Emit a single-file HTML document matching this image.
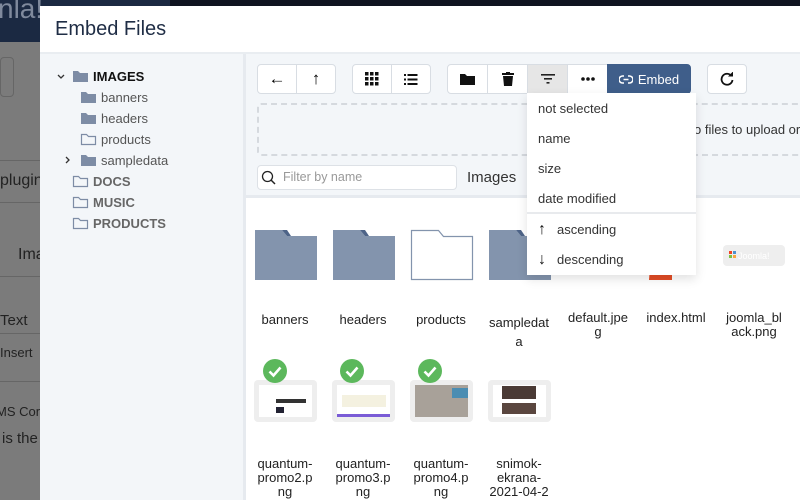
<!DOCTYPE html>
<html><head><style>
*{box-sizing:border-box;margin:0;padding:0}
body{width:800px;height:500px;overflow:hidden;position:relative;font-family:"Liberation Sans",sans-serif;background:#7b7b7b}
.abs{position:absolute}
.t{position:absolute;white-space:nowrap}
.btn{position:absolute;top:64px;height:30px;background:#fff;border:1px solid #d8dde3;display:flex;align-items:center;justify-content:center}
.dd{position:absolute;left:538px;font-size:13px;color:#333}
.lbl{position:absolute;width:78px;text-align:center;font-size:13px;color:#222;line-height:14px}
.chk{position:absolute;width:24px;height:24px;border-radius:50%;background:#5cb85c}
.thumb{position:absolute;width:63px;height:42px;background:#eeeeee;border-radius:4px}
</style></head><body>
<div class="abs" style="left:0;top:0;width:170px;height:42px;background:#1b2942"></div>
<div class="abs" style="left:170px;top:0;width:630px;height:6px;background:#0f1420"></div>
<div class="t" style="left:-2px;top:-7px;font-size:28px;color:#7f899c">nla!</div>
<div class="abs" style="left:0;top:57px;width:14px;height:40px;border:1px solid #666;border-radius:4px"></div>
<div class="abs" style="left:0;top:160px;width:40px;height:1px;background:#666"></div>
<div class="t" style="left:0;top:172px;font-size:16px;color:#222">plugin</div>
<div class="abs" style="left:0;top:202px;width:40px;height:1px;background:#666"></div>
<div class="t" style="left:18px;top:246px;font-size:16px;color:#222">Ima</div>
<div class="abs" style="left:0;top:276px;width:40px;height:1px;background:#666"></div>
<div class="t" style="left:0;top:312px;font-size:15px;color:#222">Text</div>
<div class="abs" style="left:0;top:333px;width:40px;height:1px;background:#666"></div>
<div class="t" style="left:0;top:345px;font-size:13px;color:#222">Insert</div>
<div class="abs" style="left:0;top:381px;width:40px;height:1px;background:#666"></div>
<div class="t" style="left:-4px;top:404px;font-size:13px;color:#222">MS Cor</div>
<div class="t" style="left:2px;top:430px;font-size:15px;color:#222">is the</div>
<div class="abs" style="left:40px;top:6px;width:760px;height:494px;background:#fff"></div>
<div class="t" style="left:55px;top:18px;font-size:20px;color:#1f2d45">Embed Files</div>
<div class="abs" style="left:40px;top:52px;width:760px;height:2px;background:#e9edf1"></div>
<div class="abs" style="left:40px;top:54px;width:203px;height:446px;background:#f3f6f9"></div>
<div class="abs" style="left:243px;top:54px;width:3px;height:446px;background:#e6eaef"></div>
<div class="abs" style="left:246px;top:54px;width:554px;height:142px;background:#f3f6f9"></div>
<div class="abs" style="left:246px;top:195px;width:554px;height:3px;background:#e6eaef"></div>
<svg class="abs" style="left:0;top:0" width="245" height="240">
<g fill="none" stroke="#333" stroke-width="1.3"><path d="M58 75l3 3 3-3"/><path d="M66 157l3 3-3 3"/></g>
<g fill="#7d8ca5"><path d="M73 71h5l2 2h8v9h-15z"/><path d="M81 92h5l2 2h8v9h-15z"/><path d="M81 113h5l2 2h8v9h-15z"/><path d="M81 155h5l2 2h8v9h-15z"/></g>
<g fill="none" stroke="#7d8ca5" stroke-width="1.2"><path d="M81.5 134.5h5l2 2h7v8h-14z"/><path d="M73.5 176.5h5l2 2h7v8h-14z"/><path d="M73.5 197.5h5l2 2h7v8h-14z"/><path d="M73.5 218.5h5l2 2h7v8h-14z"/></g>
</svg>
<div class="t" style="left:93px;top:69px;font-size:13px;font-weight:bold;color:#111">IMAGES</div>
<div class="t" style="left:101px;top:90px;font-size:13px;color:#555">banners</div>
<div class="t" style="left:101px;top:111px;font-size:13px;color:#555">headers</div>
<div class="t" style="left:101px;top:132px;font-size:13px;color:#555">products</div>
<div class="t" style="left:101px;top:153px;font-size:13px;color:#555">sampledata</div>
<div class="t" style="left:93px;top:174px;font-size:13px;font-weight:bold;color:#666">DOCS</div>
<div class="t" style="left:93px;top:195px;font-size:13px;font-weight:bold;color:#666">MUSIC</div>
<div class="t" style="left:93px;top:216px;font-size:13px;font-weight:bold;color:#666">PRODUCTS</div>
<div class="btn" style="left:257px;width:40px;border-radius:4px 0 0 4px;font-size:17px">←</div>
<div class="btn" style="left:296px;width:40px;border-radius:0 4px 4px 0;font-size:17px">↑</div>
<div class="btn" style="left:352px;width:40px;border-radius:4px 0 0 4px"><svg width="14" height="14"><g fill="#111"><rect x="0" y="0" width="3.5" height="3.5"/><rect x="5" y="0" width="3.5" height="3.5"/><rect x="10" y="0" width="3.5" height="3.5"/><rect x="0" y="5" width="3.5" height="3.5"/><rect x="5" y="5" width="3.5" height="3.5"/><rect x="10" y="5" width="3.5" height="3.5"/><rect x="0" y="10" width="3.5" height="3.5"/><rect x="5" y="10" width="3.5" height="3.5"/><rect x="10" y="10" width="3.5" height="3.5"/></g></svg></div>
<div class="btn" style="left:391px;width:40px;border-radius:0 4px 4px 0"><svg width="14" height="11"><g fill="#111"><rect x="0" y="0" width="2" height="2"/><rect x="3.5" y="0" width="10" height="2"/><rect x="0" y="4.5" width="2" height="2"/><rect x="3.5" y="4.5" width="10" height="2"/><rect x="0" y="9" width="2" height="2"/><rect x="3.5" y="9" width="10" height="2"/></g></svg></div>
<div class="btn" style="left:447px;width:41px;border-radius:4px 0 0 4px"><svg width="15" height="12"><path d="M0 1h5l2 2h8v9h-15z" fill="#111"/></svg></div>
<div class="btn" style="left:487px;width:41px"><svg width="12" height="14"><path d="M0 1h12v2h-12zM4 0h4v1h-4zM1 4h10l-1 10h-8z" fill="#111"/></svg></div>
<div class="btn" style="left:527px;width:41px;background:#e6e6e6"><svg width="14" height="10"><g fill="#222"><rect x="0" y="0" width="14" height="1.6"/><rect x="3" y="4" width="8" height="1.6"/><rect x="5.5" y="8" width="3" height="1.6"/></g></svg></div>
<div class="btn" style="left:567px;width:41px"><svg width="14" height="4"><g fill="#111"><circle cx="2" cy="2" r="1.8"/><circle cx="7" cy="2" r="1.8"/><circle cx="12" cy="2" r="1.8"/></g></svg></div>
<div class="btn" style="left:607px;width:84px;background:#3f5e8a;border-color:#3f5e8a;border-radius:0 4px 4px 0;color:#fff;font-size:13px"><svg width="14" height="9" style="margin-right:5px"><g fill="none" stroke="#fff" stroke-width="1.6"><path d="M5 1H3.5a3.5 3.5 0 0 0 0 7H5M9 1h1.5a3.5 3.5 0 0 1 0 7H9M4.5 4.5h5"/></g></svg>Embed</div>
<div class="btn" style="left:707px;width:40px;border-radius:4px"><svg width="14" height="14"><path d="M11.5 4A5.5 5.5 0 1 0 12.5 8" fill="none" stroke="#111" stroke-width="1.8"/><path d="M8 4.5h5v-5z" fill="#111"/></svg></div>
<div class="abs" style="left:257px;top:103px;width:560px;height:53px;border:2px dashed #d5d9de;border-radius:4px"></div>
<div class="t" style="left:694px;top:122px;font-size:13px;color:#333">o files to upload or</div>
<div class="abs" style="left:257px;top:165px;width:200px;height:25px;background:#fff;border:1px solid #dde1e6;border-radius:4px"></div>
<svg class="abs" style="left:261px;top:170px" width="16" height="16"><circle cx="6.5" cy="6.5" r="5" fill="none" stroke="#222" stroke-width="1.3"/><path d="M10 10l4 4" stroke="#222" stroke-width="1.5"/></svg>
<div class="t" style="left:283px;top:170px;font-size:12.5px;color:#999">Filter by name</div>
<div class="t" style="left:467px;top:169px;font-size:15px;color:#333">Images</div>
<svg class="abs" style="left:246px;top:220px" width="554" height="70">
<g fill="#8394ad"><path d="M9 10h27l5 6h30v44h-62z"/><path d="M87 10h27l5 6h30v44h-62z"/><path d="M243 10h27l5 6h30v44h-62z"/></g>
<g fill="#4e6488"><path d="M36 10h5l4 6h-4z"/><path d="M114 10h5l4 6h-4z"/><path d="M270 10h5l4 6h-4z"/></g>
<path d="M165.5 10.5h27l5 6h29v43h-61z" fill="#fff" stroke="#8394ad" stroke-width="1.2"/>
<path d="M406 20h20v40h-23z" fill="#e44d26"/>
<rect x="477" y="25" width="62" height="21" rx="4" fill="#eee"/>
<g><rect x="483" y="31" width="3" height="3" fill="#f44321"/><rect x="487" y="31" width="3" height="3" fill="#5091cd"/><rect x="483" y="35" width="3" height="3" fill="#7ac143"/><rect x="487" y="35" width="3" height="3" fill="#f9a541"/></g>
<text x="492" y="39" font-size="9" fill="#fff" font-family="Liberation Sans">Joomla!</text>
</svg>
<div class="lbl" style="left:246px;top:313px">banners</div>
<div class="lbl" style="left:324px;top:313px">headers</div>
<div class="lbl" style="left:402px;top:313px">products</div>
<div class="lbl" style="left:480px;top:313px;line-height:19px">sampledat<br>a</div>
<div class="lbl" style="left:559px;top:311px">default.jpe<br>g</div>
<div class="lbl" style="left:637px;top:311px">index.html</div>
<div class="lbl" style="left:715px;top:311px">joomla_bl<br>ack.png</div>
<div class="thumb" style="left:254px;top:380px"><div class="abs" style="left:5px;top:5px;width:53px;height:32px;background:#fff"></div><div class="abs" style="left:22px;top:19px;width:30px;height:4px;background:#333"></div><div class="abs" style="left:22px;top:27px;width:8px;height:6px;background:#223"></div></div>
<div class="thumb" style="left:332px;top:380px"><div class="abs" style="left:5px;top:5px;width:53px;height:32px;background:#fff"></div><div class="abs" style="left:10px;top:15px;width:44px;height:12px;background:#f4f1e0"></div><div class="abs" style="left:5px;top:34px;width:53px;height:3px;background:#7a5cd6"></div></div>
<div class="thumb" style="left:410px;top:380px"><div class="abs" style="left:5px;top:5px;width:53px;height:32px;background:#a8a199"></div><div class="abs" style="left:42px;top:8px;width:16px;height:10px;background:#4b8db2"></div></div>
<div class="thumb" style="left:488px;top:380px"><div class="abs" style="left:5px;top:5px;width:53px;height:32px;background:#fff"></div><div class="abs" style="left:14px;top:6px;width:34px;height:13px;background:#4a3a35"></div><div class="abs" style="left:14px;top:23px;width:34px;height:11px;background:#5a463f"></div></div>
<div class="chk" style="left:263px;top:359px"></div>
<div class="chk" style="left:340px;top:359px"></div>
<div class="chk" style="left:418px;top:359px"></div>
<svg class="abs" style="left:263px;top:359px" width="180" height="24"><g fill="none" stroke="#fff" stroke-width="2.6"><path d="M6.5 12.5l4 4 7-8"/><path d="M83.5 12.5l4 4 7-8"/><path d="M161.5 12.5l4 4 7-8"/></g></svg>
<div class="lbl" style="left:246px;top:457px">quantum-<br>promo2.p<br>ng</div>
<div class="lbl" style="left:324px;top:457px">quantum-<br>promo3.p<br>ng</div>
<div class="lbl" style="left:402px;top:457px">quantum-<br>promo4.p<br>ng</div>
<div class="lbl" style="left:480px;top:457px">snimok-<br>ekrana-<br>2021-04-2</div>
<div class="abs" style="left:527px;top:93px;width:169px;height:182px;background:#fff;box-shadow:0 4px 10px rgba(0,0,0,.12)"></div>
<div class="dd" style="top:101px">not selected</div>
<div class="dd" style="top:131px">name</div>
<div class="dd" style="top:161px">size</div>
<div class="dd" style="top:191px">date modified</div>
<div class="abs" style="left:527px;top:212px;width:169px;height:2px;background:#e8eaed"></div>
<div class="dd" style="top:221px;left:538px;font-size:16px;color:#111">↑</div>
<div class="dd" style="top:222px;left:557px">ascending</div>
<div class="dd" style="top:251px;left:538px;font-size:16px;color:#111">↓</div>
<div class="dd" style="top:252px;left:557px">descending</div>
</body></html>
